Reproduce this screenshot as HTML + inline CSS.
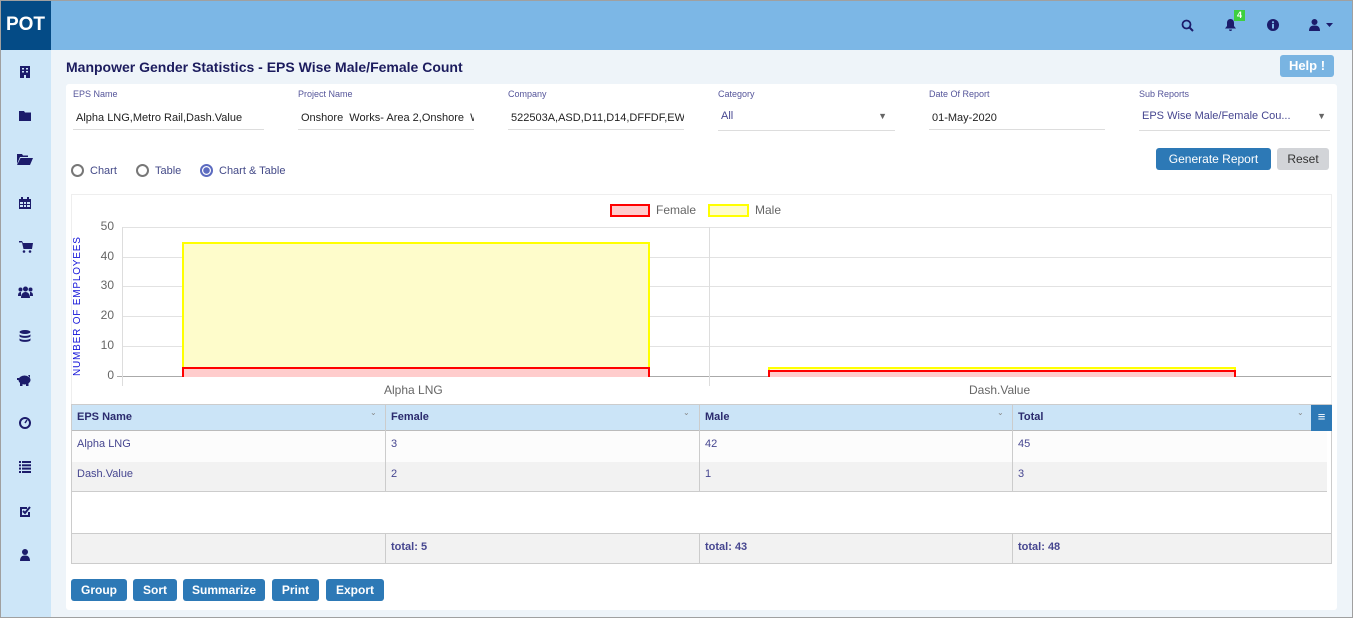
<!DOCTYPE html>
<html><head><meta charset="utf-8"><style>
*{box-sizing:border-box;margin:0;padding:0}
body{width:1353px;height:618px;overflow:hidden;font-family:"Liberation Sans",sans-serif;background:#eef4f9;position:relative}
.abs{position:absolute}
#frame{position:absolute;left:0;top:0;width:1353px;height:618px;border:1px solid #a0a0a0;pointer-events:none;z-index:10}
.top{left:0;top:0;width:1353px;height:50px;background:#7cb7e6}
.logo{left:0;top:0;width:51px;height:50px;background:#044b86;color:#fff;font-weight:bold;font-size:19px;line-height:50px;text-align:center}
.side{left:0;top:50px;width:51px;height:568px;background:#cde6f8}
.side svg{position:absolute;left:19px;width:12px;height:12px;fill:#1c1c6b}
.title{left:66px;top:59px;font-size:14px;font-weight:bold;color:#1c1c5e}
.help{left:1280px;top:55px;width:54px;height:22px;background:#79b4e2;color:#fff;border-radius:3px;font-size:13px;font-weight:bold;text-align:center;line-height:22px}
.card{left:66px;top:84px;width:1271px;height:526px;background:#fff;border-radius:3px}
.lbl{font-size:9px;color:#55559a}
.val{font-size:11px;color:#222;height:23px;border-bottom:1px solid #ddd;line-height:22px;padding-left:3px;white-space:nowrap;overflow:hidden}
.radio{font-size:11px;color:#444a88}
.rc{display:inline-block;width:13px;height:13px;border:2px solid #777;border-radius:50%;vertical-align:-3px;margin-right:6px}
.btn{background:#2d79b6;color:#fff;font-size:12px;font-weight:bold;border-radius:3px;text-align:center;height:22px;line-height:22px}
.grid{left:122px;height:1px;width:1209px;background:#e2e2e2}
.yl{left:90px;width:24px;text-align:right;font-size:12px;color:#666}
table{border-collapse:collapse;font-size:11px;color:#464690}
.th{background:#cbe4f7;font-weight:bold;color:#2b2b6e}
.tab div{position:absolute}
</style></head><body>
<div class="abs top"></div>
<div class="abs logo">POT</div>
<!-- top icons -->
<svg class="abs" style="left:1181px;top:19px" width="13" height="13" viewBox="0 0 13 13"><circle cx="5.5" cy="5.5" r="4" fill="none" stroke="#1c1c6b" stroke-width="1.8"/><path d="M8.5 8.5L12 12" stroke="#1c1c6b" stroke-width="2"/></svg>
<svg class="abs" style="left:1224px;top:18px" width="13" height="14" viewBox="0 0 13 14"><path d="M6.5 1C4 1 3 3 3 5v3L1 10.5h11L10 8V5c0-2-1-4-3.5-4z M5 11.5h3a1.5 1.5 0 0 1-3 0z" fill="#1c1c6b"/></svg>
<div class="abs" style="left:1234px;top:10px;width:11px;height:11px;background:#3ecf3e;color:#fff;font-size:9px;font-weight:bold;text-align:center;line-height:11px">4</div>
<svg class="abs" style="left:1267px;top:19px" width="12" height="12" viewBox="0 0 12 12"><circle cx="6" cy="6" r="6" fill="#1c1c6b"/><rect x="5" y="5" width="2" height="4.5" fill="#7cb7e6"/><circle cx="6" cy="3.2" r="1.1" fill="#7cb7e6"/></svg>
<svg class="abs" style="left:1309px;top:18px" width="28" height="14" viewBox="0 0 28 14"><circle cx="5.5" cy="4" r="3" fill="#1c1c6b"/><path d="M0 13c0-4 2-5.5 5.5-5.5S11 9 11 13z" fill="#1c1c6b"/><path d="M17 5h7l-3.5 4z" fill="#1c1c6b"/></svg>

<div class="abs side">
<svg style="top:16px" viewBox="0 0 12 12"><rect x="1" y="0" width="10" height="12"/><g fill="#cde6f8"><rect x="3" y="2" width="2" height="1.5"/><rect x="7" y="2" width="2" height="1.5"/><rect x="3" y="5" width="2" height="1.5"/><rect x="7" y="5" width="2" height="1.5"/><rect x="5" y="9" width="2" height="3"/></g></svg>
<svg style="top:60px" viewBox="0 0 12 12"><path d="M0 1h5l1 1.5h6V11H0z"/></svg>
<svg style="top:103px;width:16px;left:17px" viewBox="0 0 16 12"><path d="M0 1h5l1 1.5h5V4H3L0 11z M3.5 5H16l-3 7H0z"/></svg>
<svg style="top:147px" viewBox="0 0 12 12"><path d="M0 2h12v10H0z"/><g fill="#cde6f8"><rect x="1" y="5" width="3" height="2"/><rect x="5" y="5" width="2" height="2"/><rect x="8" y="5" width="3" height="2"/><rect x="1" y="8" width="3" height="2"/><rect x="5" y="8" width="2" height="2"/><rect x="8" y="8" width="3" height="2"/></g><rect x="2" y="0" width="2" height="3"/><rect x="8" y="0" width="2" height="3"/></svg>
<svg style="top:191px;width:14px" viewBox="0 0 14 12"><path d="M0 0h3l1 2h10l-1 6H4.5L3 1.5H0z"/><circle cx="5" cy="10.5" r="1.3"/><circle cx="11" cy="10.5" r="1.3"/></svg>
<svg style="top:236px;width:15px;left:18px" viewBox="0 0 15 12"><circle cx="7.5" cy="3" r="2.5"/><circle cx="2.5" cy="3.5" r="2"/><circle cx="12.5" cy="3.5" r="2"/><path d="M3 12c0-4 2-6 4.5-6S12 8 12 12z M0 10c0-3 1-4 3-4v4z M15 10c0-3-1-4-3-4v4z"/></svg>
<svg style="top:280px" viewBox="0 0 12 12"><ellipse cx="6" cy="2" rx="5.5" ry="2"/><path d="M0.5 4c0 2.5 11 2.5 11 0v2c0 2.5-11 2.5-11 0z M0.5 8c0 2.5 11 2.5 11 0v2c0 2.5-11 2.5-11 0z"/></svg>
<svg style="top:324px;width:15px;left:17px" viewBox="0 0 15 12"><ellipse cx="7.5" cy="6" rx="6" ry="4.5"/><rect x="3" y="8" width="2.5" height="4"/><rect x="9" y="8" width="2.5" height="4"/><rect x="0" y="4" width="2" height="2"/><path d="M11 1l2 0 0 3z"/></svg>
<svg style="top:367px" viewBox="0 0 12 12"><circle cx="6" cy="6" r="5" fill="none" stroke="#1c1c6b" stroke-width="2"/><path d="M6 6l2-3" stroke="#1c1c6b" stroke-width="1.5"/></svg>
<svg style="top:411px" viewBox="0 0 12 12"><rect x="0" y="0" width="2" height="2"/><rect x="3" y="0" width="9" height="2"/><rect x="0" y="3.3" width="2" height="2"/><rect x="3" y="3.3" width="9" height="2"/><rect x="0" y="6.6" width="2" height="2"/><rect x="3" y="6.6" width="9" height="2"/><rect x="0" y="10" width="2" height="2"/><rect x="3" y="10" width="9" height="2"/></svg>
<svg style="top:455px" viewBox="0 0 12 12"><path d="M1 2h7v2H3v6h6V7h2v5H1z"/><path d="M4 6l2 2 5-6" fill="none" stroke="#1c1c6b" stroke-width="2"/></svg>
<svg style="top:499px" viewBox="0 0 12 12"><circle cx="6" cy="3" r="3"/><path d="M1 12c0-4 2-5.5 5-5.5s5 1.5 5 5.5z"/></svg>
</div>

<div class="abs title">Manpower Gender Statistics - EPS Wise Male/Female Count</div>
<div class="abs help">Help !</div>
<div class="abs card"></div>

<!-- filters -->
<div class="abs lbl" style="left:73px;top:89px">EPS Name</div>
<div class="abs val" style="left:73px;top:107px;width:191px">Alpha LNG,Metro Rail,Dash.Value</div>
<div class="abs lbl" style="left:298px;top:89px">Project Name</div>
<div class="abs val" style="left:298px;top:107px;width:176px">Onshore &nbsp;Works- Area 2,Onshore &nbsp;W</div>
<div class="abs lbl" style="left:508px;top:89px">Company</div>
<div class="abs val" style="left:508px;top:107px;width:176px">522503A,ASD,D11,D14,DFFDF,EWC,</div>
<div class="abs lbl" style="left:718px;top:89px">Category</div>
<div class="abs val" style="left:718px;top:104px;width:177px;color:#464690;height:27px;line-height:24px">All<span style="position:absolute;right:8px;top:0;font-size:9px;color:#666">&#9660;</span></div>
<div class="abs lbl" style="left:929px;top:89px">Date Of Report</div>
<div class="abs val" style="left:929px;top:107px;width:176px">01-May-2020</div>
<div class="abs lbl" style="left:1139px;top:89px">Sub Reports</div>
<div class="abs val" style="left:1139px;top:104px;width:191px;color:#464690;height:27px;line-height:24px">EPS Wise Male/Female Cou...<span style="position:absolute;right:4px;top:0;font-size:9px;color:#666">&#9660;</span></div>

<div class="abs radio" style="left:71px;top:164px"><span class="rc"></span>Chart</div>
<div class="abs radio" style="left:136px;top:164px"><span class="rc"></span>Table</div>
<div class="abs radio" style="left:200px;top:164px"><span class="rc" style="border-color:#5c6bc0;background:radial-gradient(circle,#5c6bc0 3px,#fff 3.5px)"></span>Chart &amp; Table</div>
<div class="abs btn" style="left:1156px;top:148px;width:115px;font-weight:normal;font-size:12px">Generate Report</div>
<div class="abs btn" style="left:1277px;top:148px;width:52px;background:#d2d4d8;color:#333;font-weight:normal">Reset</div>

<!-- chart -->
<div class="abs" style="left:71px;top:194px;width:1261px;height:210px;border-top:1px solid #eee;border-left:1px solid #eee;border-right:1px solid #eee"></div>
<div class="abs" style="left:610px;top:204px;width:40px;height:13px;background:#fcc;border:2px solid #f00"></div>
<div class="abs" style="left:656px;top:203px;font-size:12px;color:#666">Female</div>
<div class="abs" style="left:708px;top:204px;width:41px;height:13px;background:#fefccb;border:2px solid #ff0"></div>
<div class="abs" style="left:755px;top:203px;font-size:12px;color:#666">Male</div>
<div class="abs grid" style="top:227px"></div><div class="abs grid" style="top:257px"></div><div class="abs grid" style="top:286px"></div><div class="abs grid" style="top:316px"></div><div class="abs grid" style="top:346px"></div>
<div class="abs" style="left:117px;top:376px;width:1214px;height:1px;background:#aaa"></div>
<div class="abs" style="left:122px;top:227px;width:1px;height:159px;background:#ddd"></div>
<div class="abs" style="left:709px;top:227px;width:1px;height:159px;background:#ddd"></div>
<div class="abs yl" style="top:219px">50</div><div class="abs yl" style="top:249px">40</div><div class="abs yl" style="top:278px">30</div><div class="abs yl" style="top:308px">20</div><div class="abs yl" style="top:338px">10</div><div class="abs yl" style="top:368px">0</div>
<div class="abs" style="left:72px;top:376px;transform-origin:0 0;transform:rotate(-90deg);font-size:10px;color:#1212d8;letter-spacing:0.8px;white-space:nowrap">NUMBER OF EMPLOYEES</div>
<div class="abs" style="left:182px;top:242px;width:468px;height:126px;background:#fefccb;border:2px solid #ff0;border-bottom:none"></div>
<div class="abs" style="left:182px;top:367px;width:468px;height:10px;background:#fcc;border:2px solid #f00;border-bottom:none"></div>
<div class="abs" style="left:768px;top:367px;width:468px;height:4px;background:#fefccb;border:2px solid #ff0;border-bottom:none"></div>
<div class="abs" style="left:768px;top:370px;width:468px;height:7px;background:#fcc;border:2px solid #f00;border-bottom:none"></div>
<div class="abs" style="left:384px;top:383px;font-size:12px;color:#666">Alpha LNG</div>
<div class="abs" style="left:969px;top:383px;font-size:12px;color:#666">Dash.Value</div>

<!-- table -->
<div class="abs tab" style="left:71px;top:404px;width:1261px;height:160px;border:1px solid #ccc;border-bottom:2px solid #ccc;font-size:11px;color:#464690">
<div class="th" style="left:0;top:0;width:1259px;height:26px;border-bottom:1px solid #bbb"></div>
<div style="left:0;top:26px;width:1255px;height:31px;background:#fcfcfc"></div>
<div style="left:0;top:57px;width:1255px;height:30px;background:#f2f2f2;border-bottom:1px solid #ccc"></div>
<div style="left:0;top:128px;width:1259px;height:30px;background:#f2f2f2;border-top:1px solid #ccc"></div>
<div style="left:313px;top:0;width:1px;height:87px;background:#ccc"></div><div style="left:627px;top:0;width:1px;height:87px;background:#ccc"></div><div style="left:940px;top:0;width:1px;height:87px;background:#ccc"></div>
<div style="left:313px;top:128px;width:1px;height:30px;background:#ccc"></div><div style="left:627px;top:128px;width:1px;height:30px;background:#ccc"></div><div style="left:940px;top:128px;width:1px;height:30px;background:#ccc"></div>
<div style="left:5px;top:6px;font-weight:bold;color:#2b2b6e">EPS Name</div><div style="left:298px;top:3px;font-size:8px;color:#888">&#8964;</div>
<div style="left:319px;top:6px;font-weight:bold;color:#2b2b6e">Female</div><div style="left:611px;top:3px;font-size:8px;color:#888">&#8964;</div>
<div style="left:633px;top:6px;font-weight:bold;color:#2b2b6e">Male</div><div style="left:925px;top:3px;font-size:8px;color:#888">&#8964;</div>
<div style="left:946px;top:6px;font-weight:bold;color:#2b2b6e">Total</div><div style="left:1225px;top:3px;font-size:8px;color:#888">&#8964;</div>
<div style="left:1239px;top:0;width:21px;height:26px;background:#2d79b6;color:#fff;text-align:center;line-height:24px;font-size:13px">&#8801;</div>
<div style="left:5px;top:33px">Alpha LNG</div><div style="left:319px;top:33px">3</div><div style="left:633px;top:33px">42</div><div style="left:946px;top:33px">45</div>
<div style="left:5px;top:63px">Dash.Value</div><div style="left:319px;top:63px">2</div><div style="left:633px;top:63px">1</div><div style="left:946px;top:63px">3</div>
<div style="left:319px;top:136px;font-weight:bold">total: 5</div><div style="left:633px;top:136px;font-weight:bold">total: 43</div><div style="left:946px;top:136px;font-weight:bold">total: 48</div>
</div>

<div class="abs btn" style="left:71px;top:579px;width:56px">Group</div>
<div class="abs btn" style="left:133px;top:579px;width:44px">Sort</div>
<div class="abs btn" style="left:183px;top:579px;width:82px">Summarize</div>
<div class="abs btn" style="left:272px;top:579px;width:47px">Print</div>
<div class="abs btn" style="left:326px;top:579px;width:58px">Export</div>
<div id="frame"></div>
</body></html>
